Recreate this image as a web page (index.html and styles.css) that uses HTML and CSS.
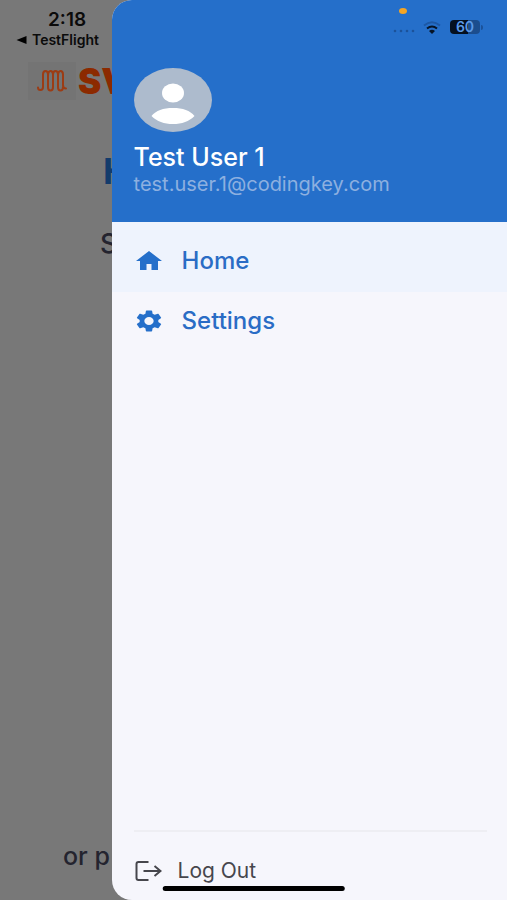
FILE: index.html
```html
<!DOCTYPE html>
<html lang="en">
<head>
<meta charset="utf-8">
<meta name="viewport" content="width=device-width, initial-scale=1">
<title>Navigation drawer</title>
<link rel="stylesheet" href="styles.css">
</head>
<body>
<div class="screen">
  <main class="page">
    <div class="clock">
      <time class="time">2:18</time>
      <a class="back" href="#">
        <svg class="back-icon" viewBox="0 0 10 8" aria-hidden="true"><path d="M0 4L10 0v8z"/></svg>
        TestFlight
      </a>
    </div>
    <div class="brand">
      <span class="brand-tile">
        <svg class="brand-icon" viewBox="0 0 30 24" aria-hidden="true"><path d="M1 18.500q0 2.500 2.500 2.500T6 18V5.500Q6 2 8.500 2T11 5.500V18q0 3.500 2.500 3.500T16 18V5.500Q16 2 18.500 2T21 5.500V18q0 3.500 2.500 3.500T26 18M11 7.500Q11 2 13.500 2T16 5.500M21 7.500Q21 2 23.500 2T26 5.500V16q0 3.500 3 3.500"/></svg>
      </span>
      <span class="brand-name">SV</span>
    </div>
    <h1 class="title">H</h1>
    <p class="subtitle">S</p>
    <p class="alternative">or p</p>
  </main>

  <aside class="drawer">
    <header class="profile">
      <svg class="avatar" viewBox="0 0 78 64" aria-hidden="true">
        <ellipse class="avatar-bg" cx="39" cy="32" rx="39" ry="32"/>
        <ellipse cx="39" cy="25" rx="11" ry="9.5"/>
        <path d="M17.500 48C22 42.500 29 40 39 40s17 2.500 21.500 8C55 53.500 48 56 39 56s-16-2.500-21.500-8z"/>
      </svg>
      <h2 class="name">Test User 1</h2>
      <p class="email">test.user.1@codingkey.com</p>
    </header>
    <nav class="menu">
      <a class="item active" href="#">
        <svg class="item-icon" viewBox="0 0 26 22" aria-hidden="true"><path d="M4 20v-9H0L13 1l13 10h-4v9h-6.500v-6h-5v6z"/></svg>
        Home
      </a>
      <a class="item" href="#">
        <svg class="item-icon" viewBox="2 2 20 20" preserveAspectRatio="none" aria-hidden="true"><path d="M19.140 12.940c.040-.300.060-.610.060-.940 0-.320-.020-.640-.070-.940l2.030-1.580c.180-.140.230-.410.120-.610l-1.920-3.320c-.120-.220-.370-.290-.590-.220l-2.390.960c-.500-.380-1.030-.700-1.620-.940l-.360-2.540c-.040-.240-.240-.410-.480-.410h-3.840c-.240 0-.430.170-.470.410l-.360 2.540c-.590.240-1.130.570-1.620.940l-2.390-.960c-.220-.080-.470 0-.590.220L2.740 8.870c-.120.210-.080.470.120.610l2.030 1.580c-.050.300-.090.630-.090.940s.020.640.070.940l-2.030 1.580c-.180.140-.230.410-.120.610l1.920 3.320c.120.220.370.290.590.220l2.390-.960c.500.380 1.030.700 1.620.940l.360 2.540c.050.240.240.410.480.410h3.840c.240 0 .440-.170.470-.410l.360-2.540c.590-.240 1.130-.560 1.620-.940l2.390.960c.220.080.470 0 .590-.220l1.920-3.320c.120-.220.070-.470-.120-.610l-2.010-1.580zM12 15.600c-1.980 0-3.600-1.620-3.600-3.600s1.620-3.600 3.600-3.600 3.600 1.620 3.600 3.600-1.620 3.600-3.600 3.600z"/></svg>
        Settings
      </a>
    </nav>
    <footer class="footer">
      <button class="logout" type="button">
        <svg class="logout-icon" viewBox="0 0 26 20" aria-hidden="true"><path d="M13 1H3Q1 1 1 3v14q0 2 2 2h10M8 10h17M19 5l6 5-6 5"/></svg>
        Log Out
      </button>
    </footer>
  </aside>

  <div class="status" aria-hidden="true">
    <span class="mic-dot"></span>
    <svg class="signal" viewBox="0 0 22 4"><circle cx="2" cy="2" r="1.300"/><circle cx="8" cy="2" r="1.300"/><circle cx="14" cy="2" r="1.300"/><circle cx="20" cy="2" r="1.300"/></svg>
    <svg class="wifi" viewBox="0 0 18 13"><path class="wifi-dim" d="M1 4.500Q9-2 17 4.500"/><path d="M4 7.500q5-4 10 0"/><path class="wifi-base" d="M6 10q3-2.500 6 0l-3 3z"/></svg>
    <span class="battery">60</span>
    <span class="battery-cap"></span>
  </div>
  <div class="home-indicator"></div>
</div>
</body>
</html>
```
FILE: styles.css
```css
* {
  box-sizing: border-box;
}

body {
  margin: 0;
  font-family: Inter, "Liberation Sans", sans-serif;
}

h1,
h2,
p {
  margin: 0;
}

a {
  color: inherit;
  text-decoration: none;
}

svg {
  display: block;
  flex: none;
}

.screen {
  position: relative;
  min-height: 100vh;
  overflow: hidden;
  background: #787878;
}

.page {
  display: flex;
  flex-direction: column;
  min-height: 100vh;
  padding: 8px 16px 28px;
  color: #24242f;
}

.clock {
  display: flex;
  flex-direction: column;
  align-items: flex-start;
  color: #0b0b0b;
  font-weight: 600;
}

.time {
  padding-left: 32px;
  font-size: 19px;
  line-height: 24px;
}

.back {
  display: flex;
  align-items: center;
  gap: 5px;
  font-size: 14px;
  line-height: 16px;
}

.back-icon {
  width: 11px;
  height: 8px;
}

.brand {
  display: flex;
  align-items: center;
  gap: 2px;
  margin-top: 14px;
  padding-left: 12px;
}

.brand-tile {
  padding: 7px 9px;
  background: #747474;
}

.brand-icon {
  width: 30px;
  height: 24px;
  fill: none;
  stroke: #9c3c14;
  stroke-width: 2;
  stroke-linecap: round;
}

.brand-name {
  color: #8c2a00;
  font-size: 35px;
  font-weight: 900;
  line-height: 36px;
}

.title {
  margin-top: 48px;
  padding-left: 87px;
  color: #133b6b;
  font-size: 36px;
  line-height: 46px;
}

.subtitle {
  margin-top: 34px;
  padding-left: 84px;
  font-size: 27px;
  font-weight: 500;
  line-height: 32px;
}

.alternative {
  margin-top: auto;
  padding-left: 47px;
  font-size: 25px;
  font-weight: 500;
  line-height: 32px;
}

.drawer {
  position: absolute;
  inset: 0 0 0 22%;
  display: flex;
  flex-direction: column;
  overflow: hidden;
  border-radius: 20px 0 0 20px;
  background: #f6f6fc;
}

.profile {
  padding: 68px 22px 26px;
  background: #256fca;
  color: #fff;
}

.avatar {
  width: 78px;
  height: 64px;
  fill: #fff;
}

.avatar-bg {
  fill: #adbbcd;
}

.name {
  margin-top: 10px;
  font-size: 25px;
  font-weight: 500;
  line-height: 30px;
}

.email {
  color: #8db0e0;
  font-size: 20px;
  line-height: 24px;
}

.menu {
  display: flex;
  flex-direction: column;
}

.item {
  display: flex;
  align-items: center;
  gap: 20px;
  padding: 14px 24px;
  color: #2a6cc5;
  font-size: 24px;
  font-weight: 500;
  line-height: 30px;
}

.active {
  padding-top: 24px;
  padding-bottom: 16px;
  background: #eef3fd;
}

.item-icon {
  width: 26px;
  height: 22px;
  fill: #256fca;
}

.footer {
  margin: auto 20px 0 22px;
  padding: 24px 0 14px;
  border-top: 2px solid #eeeef3;
}

.logout {
  display: flex;
  align-items: center;
  gap: 16px;
  padding: 0 0 0 1px;
  border: 0;
  background: none;
  color: #46464c;
  font: 21px/30px Inter, "Liberation Sans", sans-serif;
}

.logout-icon {
  width: 27px;
  height: 20px;
  fill: none;
  stroke: #46464c;
  stroke-width: 2;
}

.status {
  position: absolute;
  top: 20px;
  right: 24px;
  display: flex;
  align-items: center;
}

.mic-dot {
  position: absolute;
  top: -12px;
  left: 6px;
  width: 8px;
  height: 6px;
  border-radius: 50%;
  background: #f5a524;
}

.signal {
  width: 22px;
  height: 4px;
  margin: 8px 8px 0 0;
  fill: #1b529a;
}

.wifi {
  width: 18px;
  height: 13px;
  margin-right: 9px;
  fill: none;
  stroke: #061426;
  stroke-width: 2;
}

.wifi-dim {
  stroke: #1d58a5;
}

.wifi-base {
  fill: #061426;
  stroke: none;
}

.battery {
  width: 30px;
  border-radius: 4px;
  background: linear-gradient(90deg, #04101f 60%, #1b4d8e 60%);
  color: #5b9ae8;
  font-size: 14px;
  font-weight: 600;
  line-height: 14px;
  text-align: center;
}

.battery-cap {
  width: 2px;
  height: 5px;
  margin-left: 1px;
  border-radius: 0 2px 2px 0;
  background: #1b529a;
}

.home-indicator {
  position: absolute;
  bottom: 9px;
  left: 50%;
  width: 36%;
  height: 5px;
  border-radius: 3px;
  background: #000;
  transform: translateX(-50%);
}
```
